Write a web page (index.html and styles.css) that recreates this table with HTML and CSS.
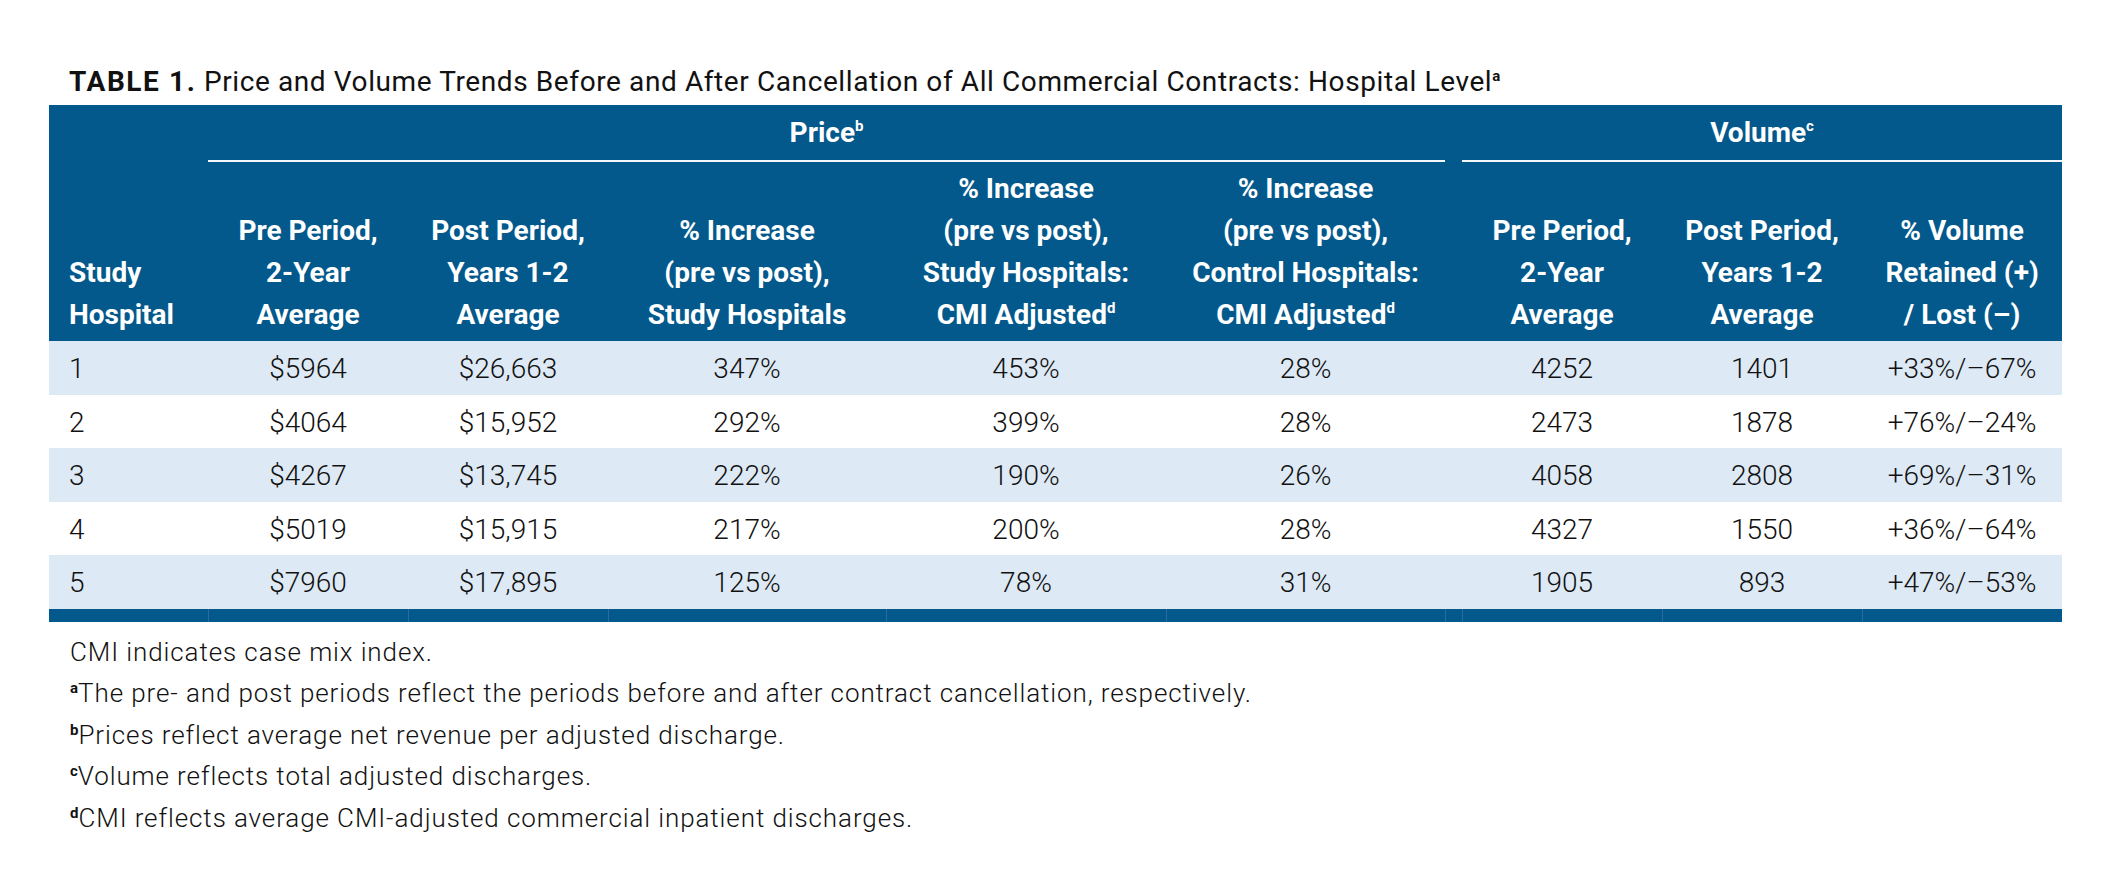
FILE: index.html
```html
<!DOCTYPE html>
<html lang="en">
<head>
<meta charset="utf-8">
<title>Table 1</title>
<link rel="stylesheet" href="styles.css">
</head>
<body>
<div class="page">
  <h1 class="title"><b>TABLE 1.</b> Price and Volume Trends Before and After Cancellation of All Commercial Contracts: Hospital Level<sup class="tsup">a</sup></h1>
  <table class="data">
    <colgroup>
      <col class="c-stub">
      <col class="c-std">
      <col class="c-std">
      <col class="c-wide">
      <col class="c-wide2">
      <col class="c-wide3">
      <col class="c-gap">
      <col class="c-std">
      <col class="c-std">
      <col class="c-std">
    </colgroup>
    <thead>
      <tr>
        <th class="stub" rowspan="2">Study<br>Hospital</th>
        <th class="group" colspan="5">Price<sup class="hsup">b</sup></th>
        <th class="gap" rowspan="2"></th>
        <th class="group" colspan="3">Volume<sup class="hsup">c</sup></th>
      </tr>
      <tr>
        <th>Pre Period,<br>2-Year<br>Average</th>
        <th>Post Period,<br>Years 1-2<br>Average</th>
        <th>% Increase<br>(pre vs post),<br>Study Hospitals</th>
        <th>% Increase<br>(pre vs post),<br>Study Hospitals:<br>CMI Adjusted<sup class="hsup">d</sup></th>
        <th>% Increase<br>(pre vs post),<br>Control Hospitals:<br>CMI Adjusted<sup class="hsup">d</sup></th>
        <th>Pre Period,<br>2-Year<br>Average</th>
        <th>Post Period,<br>Years 1-2<br>Average</th>
        <th>% Volume<br>Retained (+)<br>/ Lost (–)</th>
      </tr>
    </thead>
    <tbody>
      <tr>
        <td class="stubcell">1</td><td>$5964</td><td>$26,663</td><td>347%</td><td>453%</td><td>28%</td><td></td><td>4252</td><td>1401</td><td>+33%/–67%</td>
      </tr>
      <tr>
        <td class="stubcell">2</td><td>$4064</td><td>$15,952</td><td>292%</td><td>399%</td><td>28%</td><td></td><td>2473</td><td>1878</td><td>+76%/–24%</td>
      </tr>
      <tr>
        <td class="stubcell">3</td><td>$4267</td><td>$13,745</td><td>222%</td><td>190%</td><td>26%</td><td></td><td>4058</td><td>2808</td><td>+69%/–31%</td>
      </tr>
      <tr>
        <td class="stubcell">4</td><td>$5019</td><td>$15,915</td><td>217%</td><td>200%</td><td>28%</td><td></td><td>4327</td><td>1550</td><td>+36%/–64%</td>
      </tr>
      <tr>
        <td class="stubcell">5</td><td>$7960</td><td>$17,895</td><td>125%</td><td>78%</td><td>31%</td><td></td><td>1905</td><td>893</td><td>+47%/–53%</td>
      </tr>
    </tbody>
    <tfoot>
      <tr>
        <td></td><td></td><td></td><td></td><td></td><td></td><td></td><td></td><td></td><td></td>
      </tr>
    </tfoot>
  </table>
  <div class="notes">
    <p>CMI indicates case mix index.</p>
    <p><sup class="nsup">a</sup>The pre- and post periods reflect the periods before and after contract cancellation, respectively.</p>
    <p><sup class="nsup">b</sup>Prices reflect average net revenue per adjusted discharge.</p>
    <p><sup class="nsup">c</sup>Volume reflects total adjusted discharges.</p>
    <p><sup class="nsup">d</sup>CMI reflects average CMI-adjusted commercial inpatient discharges.</p>
  </div>
</div>
</body>
</html>
```

FILE: styles.css
```css
html, body {
  margin: 0;
  padding: 0;
  background: #ffffff;
}

body {
  font-family: Roboto, "Liberation Sans", Arial, sans-serif;
  color: #1c1c1c;
}

.page {
  padding: 65px 51px 0 49px;
}

.title {
  margin: 0 0 6px;
  padding-left: 20px;
  font-size: 28px;
  line-height: 34px;
  font-weight: 400;
  letter-spacing: 0.6px;
  color: #111111;
}

.title b {
  font-weight: 700;
  letter-spacing: 1.6px;
}

.tsup {
  font-size: 15px;
  font-weight: 700;
  line-height: 0;
  vertical-align: 10px;
  letter-spacing: 0;
}

.data {
  border-collapse: separate;
  border-spacing: 0;
  table-layout: fixed;
  width: 2013px;
}

.c-stub { width: 159px; }
.c-std { width: 200px; }
.c-wide { width: 278px; }
.c-wide2 { width: 280px; }
.c-wide3 { width: 279px; }
.c-gap { width: 17px; }

.data thead th {
  background: #03598c;
  color: #ffffff;
  font-weight: 700;
  font-size: 28px;
  line-height: 42px;
  text-align: center;
  vertical-align: bottom;
  padding: 6px 0 5px;
  white-space: nowrap;
}

.data thead th.group {
  padding: 7px 0 6px;
  border-bottom: 2px solid #f4f7fa;
}

.data thead th.stub {
  text-align: left;
  padding-left: 20px;
}

.data thead th.gap {
  padding: 0;
}

.hsup {
  font-size: 15px;
  line-height: 0;
  vertical-align: 11px;
  font-weight: 700;
}

.data tbody td {
  font-size: 28px;
  font-weight: 300;
  line-height: 50.6px;
  padding: 3px 0 0;
  text-align: center;
  white-space: nowrap;
  color: #111111;
  background: #ffffff;
}

.data tbody tr:nth-child(odd) td {
  background: #dde9f5;
}

.data tbody td.stubcell {
  text-align: left;
  padding-left: 20px;
}

.data tfoot td {
  height: 13px;
  padding: 0;
  background: #03598c;
  border-left: 1px solid #2a6c9e;
}

.data tfoot td:first-child {
  border-left: none;
}

.notes {
  padding: 10px 0 0 21px;
  font-size: 26px;
  font-weight: 300;
  line-height: 41.5px;
  letter-spacing: 0.9px;
  color: #111111;
}

.notes p {
  margin: 0;
}

.nsup {
  font-size: 15px;
  font-weight: 700;
  line-height: 0;
  vertical-align: 9px;
  letter-spacing: 0;
}
```
